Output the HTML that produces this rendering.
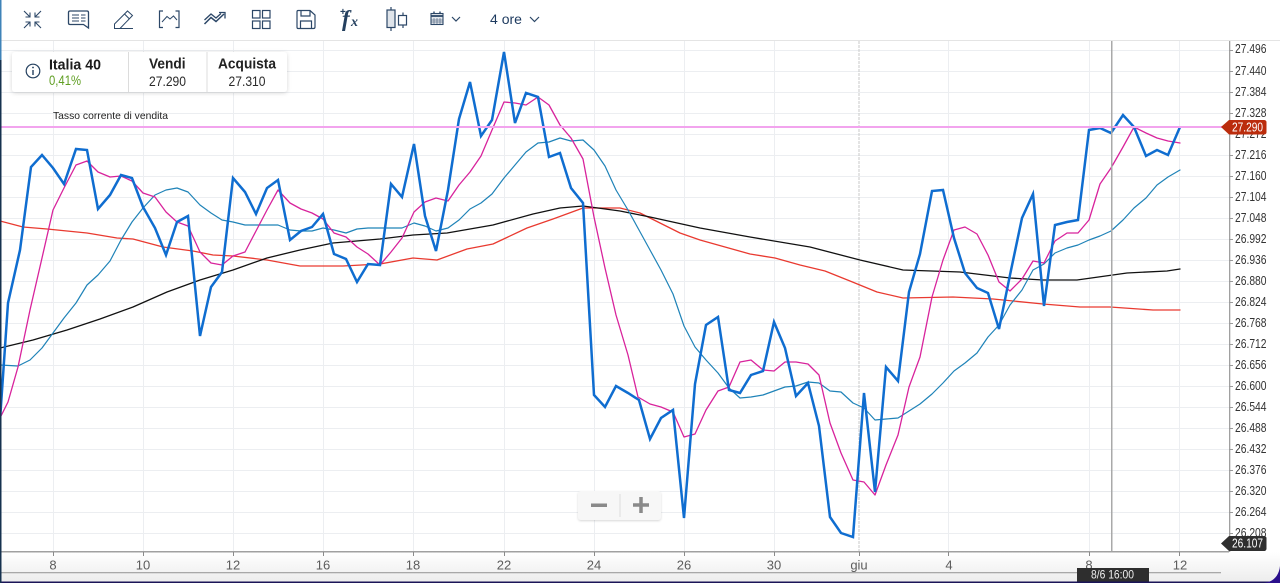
<!DOCTYPE html>
<html lang="it">
<head>
<meta charset="utf-8">
<title>Italia 40</title>
<style>
html,body{margin:0;padding:0;background:#fff;width:1280px;height:583px;overflow:hidden}
svg{display:block;font-family:"Liberation Sans",sans-serif}
</style>
</head>
<body>
<svg width="1280" height="583" viewBox="0 0 1280 583" xmlns="http://www.w3.org/2000/svg">
<defs>
<linearGradient id="bot" x1="0" y1="0" x2="0" y2="1"><stop offset="0" stop-color="#ffffff"/><stop offset="1" stop-color="#ececec"/></linearGradient>
<filter id="sh" x="-5%" y="-20%" width="110%" height="150%"><feDropShadow dx="0" dy="1" stdDeviation="2" flood-color="#000" flood-opacity=".16"/></filter>
<filter id="sh2" x="-10%" y="-20%" width="120%" height="150%"><feDropShadow dx="0" dy="1" stdDeviation="1" flood-color="#000" flood-opacity=".16"/></filter>
</defs>
<rect width="1280" height="583" fill="#fff"/>

<!-- grid -->
<g stroke="#eceef1" stroke-width="1" fill="none">
<path d="M0 50.500H1229M0 71.500H1229M0 92.500H1229M0 113.500H1229M0 134.500H1229M0 155.500H1229M0 176.500H1229M0 197.500H1229M0 218.500H1229M0 239.500H1229M0 260.500H1229M0 281.500H1229M0 302.500H1229M0 323.500H1229M0 344.500H1229M0 365.500H1229M0 386.500H1229M0 407.500H1229M0 428.500H1229M0 449.500H1229M0 470.500H1229M0 491.500H1229M0 512.500H1229M0 533.500H1229"/>
<path d="M53.500 41V551M143.500 41V551M233.500 41V551M323.500 41V551M413.500 41V551M504.500 41V551M594.500 41V551M684.500 41V551M774.500 41V551M948.500 41V551M1089.500 41V551M1179.500 41V551"/>
</g>
<path d="M859 41V551" stroke="#c9c9c9" stroke-width="1" stroke-dasharray="3 1"/>

<!-- toolbar -->
<rect x="0" y="0" width="1280" height="40" fill="#fff"/>
<rect x="0" y="40" width="1280" height="1" fill="#e4e4e4"/>
<g fill="none" stroke="#2c4767" stroke-width="1.100">
<!-- compress -->
<path d="M24 11L30 17M30 12.500V17H25.500M41 11L35 17M35 12.500V17H39.500M24 28L30 22M25.500 22H30V26.500M41 28L35 22M35 26.500V22H39.500"/>
<!-- comment -->
<path d="M70 11H87C88 11 88.500 11.700 88.500 12.500V28L83.500 24.500H70C69 24.500 68.500 24 68.500 23V12.500C68.500 11.700 69 11 70 11Z" stroke-width="1.300"/>
<path d="M72 15H79M72 18H79M72 21H79M81 15H85.500M81 18H85.500M81 21H85.500" stroke-width="1"/>
<!-- pencil -->
<path d="M114.500 24L127.500 11L132.500 15.500L120 28.500H114.500V24ZM124.500 14L129.500 19M119 28.500H133" stroke-width="1"/>
<!-- bracket chart -->
<path d="M163 11H159.500V27.500H163M175.500 11H179V27.500H175.500" stroke-width="1.200"/>
<path d="M162 22L167 16.500L170 19L173.500 16L177 20" stroke-width="1"/>
<!-- trend -->
<path d="M204.500 24L211 17.500L216 21.500L224 14" stroke-width="1.500"/>
<path d="M204.500 20L211 14L216 18L221 13.500M219 12.500H225V18.500" stroke-width="1.300"/>
<!-- grid -->
<rect x="252.500" y="10.500" width="7.500" height="7.500" stroke-width="1.200"/><rect x="262.500" y="10.500" width="7.500" height="7.500" stroke-width="1.200"/><rect x="252.500" y="21" width="7.500" height="7.500" stroke-width="1.200"/><rect x="262.500" y="21" width="7.500" height="7.500" stroke-width="1.200"/>
<!-- save -->
<path d="M298 10.500H310L315 15V27C315 27.800 314.500 28.500 313.500 28.500H298C297.200 28.500 297 27.800 297 27V12C297 11 297.200 10.500 298 10.500Z" stroke-width="1.200"/>
<path d="M301 10.500V16H310V11M300.500 28.500V21H311.500V28.500" stroke-width="1.200"/>
<!-- candles -->
<rect x="387" y="10" width="8" height="17.500" fill="#dfe4ea" stroke-width="1.200"/>
<path d="M391 7V10M391 27.500V31M403 12.500V15.500M403 25V28" stroke-width="1.200"/>
<rect x="398.500" y="15.500" width="8" height="9.500" stroke-width="1.200"/>
<!-- chevrons -->
<path d="M452 17L456 21L460 17M530 17L534.500 21.500L539 17" stroke-width="1.200"/>
</g>
<!-- calendar -->
<g fill="none" stroke="#2c4767">
<rect x="431" y="13.500" width="12" height="11" fill="#e3e7ec" stroke-width="1.100"/>
<path d="M431 16H443" stroke-width="1.800"/>
<path d="M434 11.500V14M440 11.500V14" stroke-width="1.400"/>
<path d="M434 18V24M437 18V24M440 18V24M431 20H443M431 22H443" stroke-width=".5"/>
</g>
<text x="342" y="26" font-family="'Liberation Serif',serif" font-style="italic" font-weight="700" font-size="23" fill="#24405f">f</text>
<text x="351" y="26" font-family="'Liberation Serif',serif" font-style="italic" font-weight="700" font-size="14" fill="#24405f">x</text>
<text x="340" y="15" font-size="10" font-weight="700" fill="#24405f">+</text>
<text x="490" y="24" font-size="14" fill="#1d3a5f" textLength="32" lengthAdjust="spacingAndGlyphs">4 ore</text>

<!-- lines -->
<g fill="none" stroke-linejoin="round" stroke-linecap="round">
<polyline stroke="#e93a30" stroke-width="1.300" points="0,221 23,227 47,229 87,233 117,238 133,239 163,247 193,251 213,255 233,256 267,260 300,266 343,266 380,264 413,258 437,260 467,249 493,244 527,228 553,219 583,208 620,208 640,213 660,223 680,233 700,240 725,247 750,254 775,258 800,265 825,271 850,281 877,292 903,298 953,297 993,299 1043,304 1080,307 1110,307 1153,310 1180,310"/>
<polyline stroke="#111" stroke-width="1.300" points="0,348 33,340 67,330 100,319 133,307 167,292 200,280 233,270 267,258 300,250 333,243 380,239 413,235 447,233 493,225 533,214 560,208 583,206 620,211 650,217 700,228 750,237 810,247 860,260 903,270 960,272 1010,278 1043,280 1077,280 1127,273 1167,271 1180,269"/>
<polyline stroke="#1f83b8" stroke-width="1.200" points="0,365 18,366 30,360 42,348 53,333 64,318 76,303 87,285 98,275 110,261 121,240 132,222 143,208 155,195 166,190 177,188 188,192 200,205 211,213 222,220 233,222 245,225 256,225 267,225 278,225 290,230 301,231 312,231 323,228 334,230 346,233 357,229 368,228 380,228 391,228 402,228 414,223 425,226 436,231 448,228 459,220 470,209 481,203 492,194 504,178 515,165 526,152 538,143 549,142 560,138 571,141 583,140 594,150 605,166 616,190 628,210 639,230 650,250 661,270 673,294 684,326 695,347 706,360 718,373 729,388 740,398 751,397 763,395 774,391 785,387 796,386 808,382 819,383 830,391 841,392 853,403 864,408 875,420 886,419 898,418 909,411 920,404 932,394 943,383 954,371 965,363 977,353 988,337 999,325 1010,305 1022,290 1033,270 1044,264 1055,253 1067,248 1078,245 1089,240 1100,236 1111,231 1123,220 1134,208 1146,198 1157,185 1168,177 1180,170"/>
<polyline stroke="#d8239c" stroke-width="1.300" points="0,418 8,402 18,367 30,310 42,258 53,210 64,188 76,165 87,161 98,172 110,177 121,176 132,181 143,193 155,197 166,212 177,222 188,226 200,252 211,263 222,265 233,256 245,252 256,231 267,210 278,190 290,203 301,209 312,213 323,219 334,233 346,237 357,247 368,254 380,265 391,252 402,238 414,212 425,202 436,198 448,201 459,185 470,172 481,156 492,130 504,102 515,103 526,105 538,97 549,105 560,125 571,138 583,159 594,217 605,268 616,315 628,355 638,397 650,404 661,407 673,412 684,437 695,434 706,410 718,391 729,387 740,362 751,360 763,370 774,371 785,362 796,362 808,364 819,375 830,423 841,453 853,480 864,482 875,495 886,465 898,435 909,387 920,357 932,297 943,260 954,230 965,227 977,234 988,255 999,282 1010,291 1022,279 1033,261 1044,263 1055,241 1067,233 1078,233 1089,220 1100,184 1111,168 1123,147 1134,127 1146,133 1157,138 1168,141 1180,143"/>
<polyline stroke="#0f6dd0" stroke-width="2.500" stroke-linejoin="miter" stroke-linecap="butt" points="0,420 8,303 20,250 31,167 42,155 53,168 64,184 76,149 87,150 98,209 110,195 121,175 132,178 143,207 155,228 166,255 177,222 188,216 200,336 211,287 222,272 233,178 245,192 256,214 267,188 278,180 290,240 301,231 312,227 323,214 334,254 346,259 357,282 368,264 380,265 391,184 402,197 414,144 425,216 436,251 448,190 459,119 470,82 481,136 492,120 504,52 515,123 526,93 538,97 549,157 560,153 571,188 583,203 594,395 605,407 616,386 628,393 639,400 650,439 661,418 673,410 684,518 695,384 706,325 718,317 729,390 740,393 751,375 763,371 774,322 785,348 796,396 808,383 819,426 830,517 841,533 853,537 864,393 875,492 886,367 898,381 909,292 920,254 932,191 943,190 954,238 965,273 977,288 988,293 999,329 1010,275 1022,218 1033,194 1044,306 1055,225 1067,222 1078,220 1089,130 1100,128 1111,133 1123,115 1134,127 1146,156 1157,150 1168,155 1180,127"/>
</g>

<!-- current rate line -->
<rect x="0" y="126" width="1224" height="2" fill="#f2a4ee"/>
<text x="53" y="119" font-size="10.500" fill="#222" textLength="115" lengthAdjust="spacingAndGlyphs">Tasso corrente di vendita</text>

<!-- crosshair -->
<rect x="1111" y="41" width="1.500" height="527" fill="#a9a9a9"/>

<!-- bottom bar -->
<rect x="0" y="552" width="1280" height="31" fill="url(#bot)"/>
<rect x="0" y="551" width="1229" height="1.500" fill="#a0a0a0"/>
<rect x="1229" y="41" width="1.300" height="511" fill="#a0a0a0"/>
<rect x="0" y="572" width="1221" height="1.300" fill="#a8a8a8"/>
<path d="M53.500 552V556M143.500 552V556M233.500 552V556M323.500 552V556M413.500 552V556M504.500 552V556M594.500 552V556M684.500 552V556M774.500 552V556M859.500 552V556M948.500 552V556M1089.500 552V556M1179.500 552V556" stroke="#8a8a8a"/>
<g font-size="13" fill="#5c5c5c" text-anchor="middle">
<text x="53" y="569.500">8</text><text x="143" y="569.500">10</text><text x="233" y="569.500">12</text><text x="323" y="569.500">16</text><text x="413" y="569.500">18</text><text x="504" y="569.500">22</text><text x="594" y="569.500">24</text><text x="684" y="569.500">26</text><text x="774" y="569.500">30</text><text x="859" y="569.500">giu</text><text x="949" y="569.500">4</text><text x="1089" y="569.500">8</text><text x="1180" y="569.500">12</text>
</g>

<!-- right axis -->
<path d="M1229 50.500H1233M1229 71.500H1233M1229 92.500H1233M1229 113.500H1233M1229 155.500H1233M1229 176.500H1233M1229 197.500H1233M1229 218.500H1233M1229 239.500H1233M1229 260.500H1233M1229 281.500H1233M1229 302.500H1233M1229 323.500H1233M1229 344.500H1233M1229 365.500H1233M1229 386.500H1233M1229 407.500H1233M1229 428.500H1233M1229 449.500H1233M1229 470.500H1233M1229 491.500H1233M1229 512.500H1233M1229 533.500H1233" stroke="#9a9a9a"/>
<g font-size="12.500" fill="#333">
<text x="1235" y="53" textLength="31.500" lengthAdjust="spacingAndGlyphs">27.496</text><text x="1235" y="75" textLength="31.500" lengthAdjust="spacingAndGlyphs">27.440</text><text x="1235" y="96" textLength="31.500" lengthAdjust="spacingAndGlyphs">27.384</text><text x="1235" y="117" textLength="31.500" lengthAdjust="spacingAndGlyphs">27.328</text><text x="1235" y="138" textLength="31.500" lengthAdjust="spacingAndGlyphs">27.272</text><text x="1235" y="159" textLength="31.500" lengthAdjust="spacingAndGlyphs">27.216</text><text x="1235" y="180" textLength="31.500" lengthAdjust="spacingAndGlyphs">27.160</text><text x="1235" y="201" textLength="31.500" lengthAdjust="spacingAndGlyphs">27.104</text><text x="1235" y="222" textLength="31.500" lengthAdjust="spacingAndGlyphs">27.048</text><text x="1235" y="243" textLength="31.500" lengthAdjust="spacingAndGlyphs">26.992</text><text x="1235" y="264" textLength="31.500" lengthAdjust="spacingAndGlyphs">26.936</text><text x="1235" y="285" textLength="31.500" lengthAdjust="spacingAndGlyphs">26.880</text><text x="1235" y="306" textLength="31.500" lengthAdjust="spacingAndGlyphs">26.824</text><text x="1235" y="327" textLength="31.500" lengthAdjust="spacingAndGlyphs">26.768</text><text x="1235" y="348" textLength="31.500" lengthAdjust="spacingAndGlyphs">26.712</text><text x="1235" y="369" textLength="31.500" lengthAdjust="spacingAndGlyphs">26.656</text><text x="1235" y="390" textLength="31.500" lengthAdjust="spacingAndGlyphs">26.600</text><text x="1235" y="411" textLength="31.500" lengthAdjust="spacingAndGlyphs">26.544</text><text x="1235" y="432" textLength="31.500" lengthAdjust="spacingAndGlyphs">26.488</text><text x="1235" y="453" textLength="31.500" lengthAdjust="spacingAndGlyphs">26.432</text><text x="1235" y="474" textLength="31.500" lengthAdjust="spacingAndGlyphs">26.376</text><text x="1235" y="495" textLength="31.500" lengthAdjust="spacingAndGlyphs">26.320</text><text x="1235" y="516" textLength="31.500" lengthAdjust="spacingAndGlyphs">26.264</text><text x="1235" y="537" textLength="31.500" lengthAdjust="spacingAndGlyphs">26.208</text>
</g>

<!-- price tags -->
<path d="M1221 127L1229 120H1264C1265.500 120 1266.500 121 1266.500 122V132.500C1266.500 133.500 1265.500 134.500 1264 134.500H1229Z" fill="#bb2c0c"/>
<text x="1232" y="131.500" font-size="12.500" fill="#fff" textLength="31" lengthAdjust="spacingAndGlyphs">27.290</text>
<path d="M1221 543.500L1229 536H1264C1265.500 536 1266.500 537 1266.500 538V548.500C1266.500 550 1265.500 551 1264 551H1229Z" fill="#2f2f2f"/>
<text x="1232" y="547.500" font-size="12.500" fill="#fff" textLength="31" lengthAdjust="spacingAndGlyphs">26.107</text>

<!-- crosshair label -->
<rect x="1077" y="568" width="72" height="15" fill="#2e2e2e"/>
<text x="1091" y="578.500" font-size="12" fill="#eee" textLength="43" lengthAdjust="spacingAndGlyphs">8/6 16:00</text>

<!-- edges -->
<rect x="0" y="581.500" width="1280" height="1.500" fill="#1a1458"/>
<rect x="0" y="41" width="1.500" height="542" fill="#16324f"/>
<rect x="0" y="0" width="1.500" height="60" fill="#3f83b8"/>
<path d="M1280 566V583H1264C1273 582 1279 576 1280 566Z" fill="#2a0f8c"/>

<!-- info card -->
<rect x="12" y="52" width="275" height="40" rx="3" fill="#fff" filter="url(#sh)"/>
<path d="M128.500 52V92M207 52V92" stroke="#dcdcdc"/>
<circle cx="33" cy="71" r="6.800" fill="none" stroke="#24405f" stroke-width="1.200"/>
<path d="M33 70V75" stroke="#24405f" stroke-width="1.400"/>
<circle cx="33" cy="67.500" r=".9" fill="#24405f"/>
<text x="49" y="69.500" font-size="15" font-weight="700" fill="#1c1c1c" textLength="52" lengthAdjust="spacingAndGlyphs">Italia 40</text>
<text x="49" y="85" font-size="13.500" fill="#5f9e22" textLength="32" lengthAdjust="spacingAndGlyphs">0,41%</text>
<text x="149" y="68.500" font-size="15" font-weight="700" fill="#222" textLength="36.500" lengthAdjust="spacingAndGlyphs">Vendi</text>
<text x="149" y="86" font-size="14" fill="#2a2a2a" textLength="37" lengthAdjust="spacingAndGlyphs">27.290</text>
<text x="218" y="68.500" font-size="15" font-weight="700" fill="#222" textLength="58" lengthAdjust="spacingAndGlyphs">Acquista</text>
<text x="228.500" y="86" font-size="14" fill="#2a2a2a" textLength="37" lengthAdjust="spacingAndGlyphs">27.310</text>

<!-- zoom control -->
<rect x="578" y="491" width="83" height="29" rx="3" fill="#f7f7f7" filter="url(#sh2)"/>
<rect x="619.500" y="494" width="1" height="23" fill="#dcdcdc"/>
<rect x="591" y="503.500" width="16" height="3.500" fill="#8a8a8a"/>
<path d="M633 505H649M641 497V513" stroke="#8a8a8a" stroke-width="3.500"/>
</svg>
</body>
</html>
